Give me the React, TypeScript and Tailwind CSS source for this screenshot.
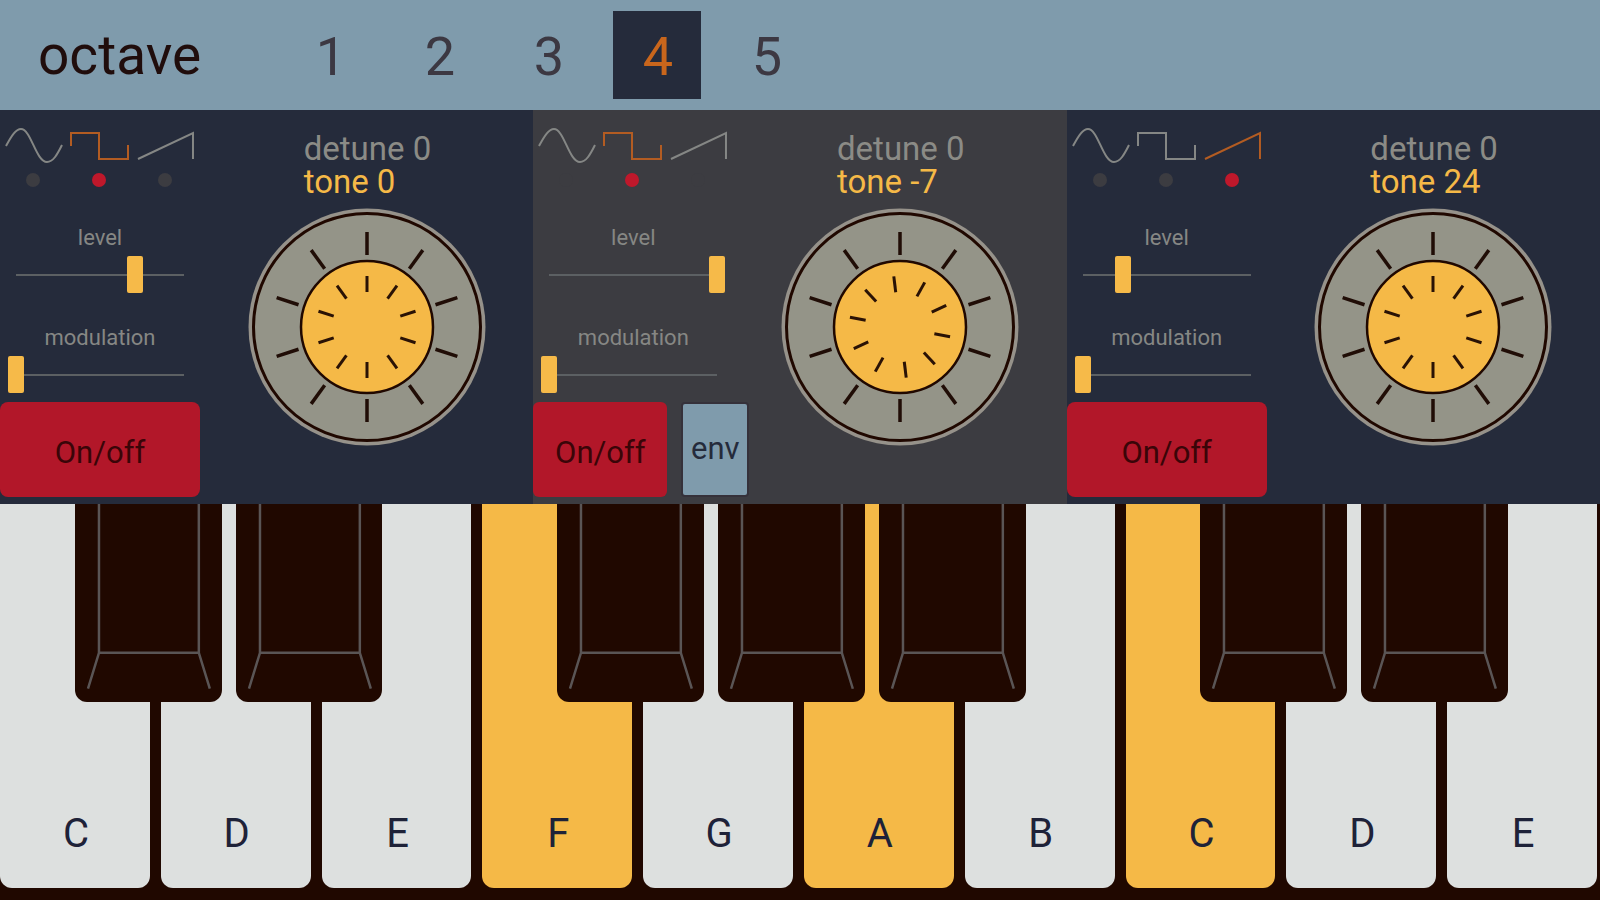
import React, { useState } from 'react';
import clsx from 'clsx';

type Wave = 'sine' | 'square' | 'saw';

interface Oscillator {
  id: string;
  wave: Wave;
  level: number;
  modulation: number;
  detune: number;
  tone: number;
  knobAngle: number;
  envelope: boolean;
}

interface PianoKey {
  note: string;
  pressed: boolean;
  sharp: boolean;
}

const OCTAVES = [1, 2, 3, 4, 5];

const WAVES: { name: Wave; path: string }[] = [
  { name: 'sine', path: 'M6 20C12 9 16 3 21 3C31 3 36 36 47 36C53 36 57 29 62 19' },
  { name: 'square', path: 'M5 20V7H33V33H62V19' },
  { name: 'saw', path: 'M6 33L61 7V33' },
];

const OSCILLATORS: Oscillator[] = [
  { id: 'osc1', wave: 'square', level: 71, modulation: 0, detune: 0, tone: 0, knobAngle: 0, envelope: false },
  { id: 'osc2', wave: 'square', level: 100, modulation: 0, detune: 0, tone: -7, knobAngle: -7, envelope: true },
  { id: 'osc3', wave: 'saw', level: 24, modulation: 0, detune: 0, tone: 24, knobAngle: 0, envelope: false },
];

const KEYS: PianoKey[] = [
  { note: 'C', pressed: false, sharp: true },
  { note: 'D', pressed: false, sharp: true },
  { note: 'E', pressed: false, sharp: false },
  { note: 'F', pressed: true, sharp: true },
  { note: 'G', pressed: false, sharp: true },
  { note: 'A', pressed: true, sharp: true },
  { note: 'B', pressed: false, sharp: false },
  { note: 'C', pressed: true, sharp: true },
  { note: 'D', pressed: false, sharp: true },
  { note: 'E', pressed: false, sharp: false },
];

const TICKS = [0, 36, 72, 108, 144, 180, 216, 252, 288, 324];

const Slider: React.FC<{ id: string; label: string; initial: number }> = ({ id, label, initial }) => {
  const [value, setValue] = useState(initial);

  return (
    <div className="flex flex-col gap-1.5">
      <label htmlFor={id} className="text-center text-[22px] leading-6 text-[#868784]">
        {label}
      </label>
      <input
        id={id}
        type="range"
        min={0}
        max={100}
        value={value}
        onChange={(e) => setValue(Number(e.target.value))}
        className="mx-2 h-[37px] appearance-none bg-[linear-gradient(#5c6063,#5c6063)] bg-[length:calc(100%-16px)_2px] bg-center bg-no-repeat [&::-webkit-slider-thumb]:h-[37px] [&::-webkit-slider-thumb]:w-4 [&::-webkit-slider-thumb]:appearance-none [&::-webkit-slider-thumb]:rounded-xs [&::-webkit-slider-thumb]:bg-[#f6ba49]"
      />
    </div>
  );
};

const Knob: React.FC<{ angle: number }> = ({ angle }) => (
  <svg viewBox="-120 -120 240 240" className="size-60" aria-hidden="true">
    <circle r="118.5" fill="#96928a" />
    <circle r="113.5" fill="#949488" stroke="#200800" strokeWidth="3" />
    {TICKS.map((t) => (
      <line key={t} y1="-95" y2="-72" stroke="#200d06" strokeWidth="3.5" transform={`rotate(${t})`} />
    ))}
    <circle r="66" fill="#f5b947" stroke="#200800" strokeWidth="2.5" />
    <g transform={`rotate(${angle})`}>
      {TICKS.map((t) => (
        <line key={t} y1="-51" y2="-35" stroke="#2a1205" strokeWidth="3" transform={`rotate(${t})`} />
      ))}
    </g>
  </svg>
);

const OscillatorPanel: React.FC<{ osc: Oscillator }> = ({ osc }) => {
  const [wave, setWave] = useState<Wave>(osc.wave);
  const [enabled, setEnabled] = useState(true);

  return (
    <section className={clsx('flex h-[394px]', osc.envelope ? 'bg-[#3c3c41]' : 'bg-[#252b3b]')}>
      <div className="w-3/8 pt-4">
        <div className="grid grid-cols-3 pr-0.5">
          {WAVES.map((w) => (
            <label key={w.name} aria-label={w.name} className="flex flex-col items-center gap-[7px]">
              <svg viewBox="0 0 66 40" className="h-10 w-full" fill="none">
                <path d={w.path} stroke={wave === w.name ? '#b35c22' : '#858785'} strokeWidth="2" />
              </svg>
              <input
                type="radio"
                name={`${osc.id}-wave`}
                checked={wave === w.name}
                onChange={() => setWave(w.name)}
                className="size-3.5 appearance-none rounded-full bg-[#3c3c41] checked:bg-[#bf182b]"
              />
            </label>
          ))}
        </div>

        <div className="mt-[39px] flex flex-col gap-[33px]">
          <Slider id={`${osc.id}-level`} label="level" initial={osc.level} />
          <Slider id={`${osc.id}-modulation`} label="modulation" initial={osc.modulation} />
        </div>

        <div className="mt-[9px] flex items-center gap-3.5">
          <button
            type="button"
            aria-pressed={enabled}
            onClick={() => setEnabled(!enabled)}
            className={clsx(
              'h-[95px] shrink-0 bg-[#b21729] pt-2 text-[31px] text-[#3a0508]',
              osc.envelope ? 'w-[134px] rounded-md' : 'w-full rounded-lg'
            )}
          >
            On/off
          </button>
          {osc.envelope && (
            <button
              type="button"
              className="h-[95px] w-[68px] shrink-0 rounded-sm border-2 border-[#35313a] bg-[#7f9bac] text-[31px] text-[#252b3b]"
            >
              env
            </button>
          )}
        </div>
      </div>

      <div className="flex flex-1 flex-col items-center pt-[22px]">
        <div className="w-[126px] text-[33px] leading-[33px] whitespace-nowrap">
          <p className="text-[#8b8b86]">detune {osc.detune}</p>
          <p className="text-[#f5b947]">tone {osc.tone}</p>
        </div>
        <div className="mt-[9px]">
          <Knob angle={osc.knobAngle} />
        </div>
      </div>
    </section>
  );
};

const Key: React.FC<{ pianoKey: PianoKey }> = ({ pianoKey }) => (
  <div className="relative flex">
    <button
      type="button"
      className={clsx(
        'flex flex-1 items-end justify-center rounded-b-xl pb-[34px] pl-0.5 text-[40px] leading-10 text-[#1e2238]',
        pianoKey.pressed ? 'bg-[#f5b947]' : 'bg-[#dde0df]'
      )}
    >
      {pianoKey.note}
    </button>
    {/* the sharp overlaps this key and the next one */}
    {pianoKey.sharp && (
      <button
        type="button"
        aria-label={`${pianoKey.note} sharp`}
        className="absolute top-0 left-1/2 z-10 w-[98%] overflow-hidden rounded-b-xl bg-[#200800]"
      >
        <svg viewBox="0 0 147 198" className="w-full" fill="none" stroke="#5a5555" strokeWidth="2.5">
          <path d="M24 0V149L13 185M124 0V149L135 185M24 149H124" />
        </svg>
      </button>
    )}
  </div>
);

const App: React.FC = () => {
  const [octave, setOctave] = useState(4);

  return (
    <main className="flex min-h-screen flex-col bg-[#200800] font-['Roboto',sans-serif]">
      <header className="flex h-[110px] items-center bg-[#7f9bac] pl-[38px] text-[55px]">
        <h1 className="w-[248px] text-[#200d0c]">octave</h1>
        <nav className="flex gap-[21px]">
          {OCTAVES.map((n) => (
            <button
              key={n}
              type="button"
              aria-pressed={octave === n}
              onClick={() => setOctave(n)}
              className={clsx(
                'size-[88px] pt-0.5 pl-0.5 text-[54px]',
                octave === n ? 'bg-[#252b3b] text-[#c9661c]' : 'text-[#3c3842]'
              )}
            >
              {n}
            </button>
          ))}
        </nav>
      </header>

      <div className="grid grid-cols-3">
        {OSCILLATORS.map((osc) => (
          <OscillatorPanel key={osc.id} osc={osc} />
        ))}
      </div>

      <div className="grid flex-1 grid-cols-10 gap-[11px] pr-[3px] pb-3">
        {KEYS.map((k, i) => (
          <Key key={i} pianoKey={k} />
        ))}
      </div>
    </main>
  );
};

export default App;
